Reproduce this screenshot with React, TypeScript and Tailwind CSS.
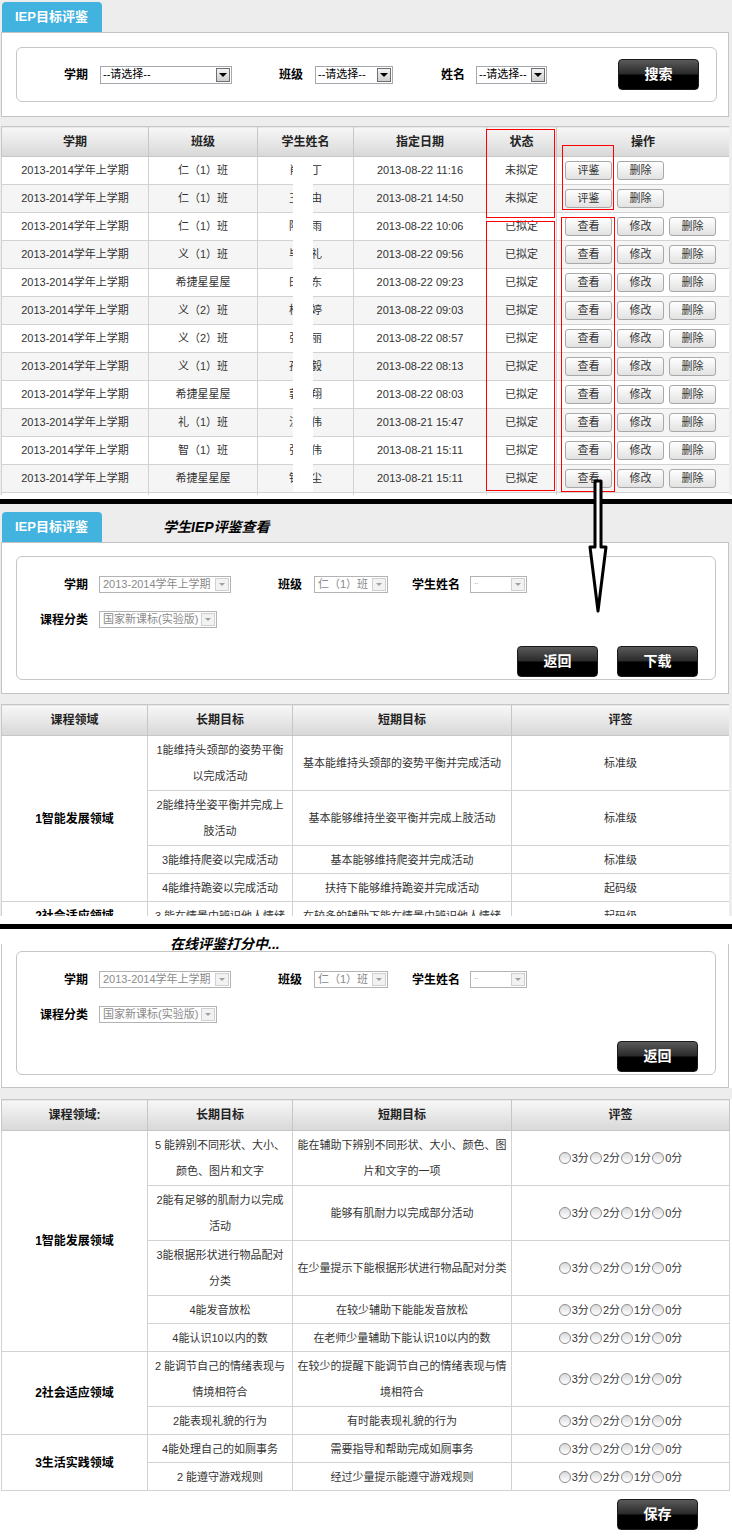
import React from "react";

const FONT = "font-['Liberation_Sans','Noto_Sans_CJK_SC',sans-serif]";

const th =
  "h-[30px] border border-[#c6c6c6] bg-gradient-to-b from-[#f7f7f7] to-[#d8d8d8] text-[12px] font-bold text-[#222] text-center";
const td = "h-[28px] border border-[#d2d2d2] text-center text-[11px] text-[#333] whitespace-nowrap px-0";

function Tab() {
  return (
    <div className="flex h-[30px] w-[100px] items-center rounded-t-[4px] bg-[#42b2df] pl-[13px] text-[13px] font-bold text-white">
      IEP目标评鉴
    </div>
  );
}

function Select({ className, text }: { className: string; text: React.ReactNode }) {
  return (
    <div className={`flex h-[18px] items-stretch border border-[#a3a9ae] bg-white p-[1px] ${className}`}>
      <span className="flex flex-1 items-center overflow-hidden whitespace-nowrap pl-[1px] text-[11px] text-black">{text}</span>
      <span className="flex w-[14px] items-center justify-center border border-[#6f6f6f] bg-gradient-to-b from-[#f2f2f2] to-[#cfcfcf]">
        <span className="h-0 w-0 border-x-[4px] border-t-[4px] border-x-transparent border-t-black" />
      </span>
    </div>
  );
}

function DSelect({ className, text }: { className: string; text: React.ReactNode }) {
  return (
    <div className={`flex h-[17px] items-stretch border border-[#b3b3b3] bg-white p-[1px] ${className}`}>
      <span className="flex flex-1 items-center overflow-hidden whitespace-nowrap pl-[2px] text-[11px] text-[#8a8a8a]">{text}</span>
      <span className="flex w-[14px] items-center justify-center border border-[#d0d0d0] bg-[#f2f2f2]">
        <span className="h-0 w-0 border-x-[3px] border-t-[3px] border-x-transparent border-t-[#a0a0a0]" />
      </span>
    </div>
  );
}

function Label({ className, children }: { className: string; children: React.ReactNode }) {
  return <span className={`text-right text-[12px] font-bold text-black ${className}`}>{children}</span>;
}

function BlackBtn({ children, className = "" }: { children: React.ReactNode; className?: string }) {
  return (
    <div
      className={`flex h-[31px] w-[81px] items-center justify-center rounded-[4px] border border-[#1a1a1a] bg-[linear-gradient(#5a5a5a_0%,#2a2a2a_48%,#000_52%,#000_100%)] text-[14px] font-bold text-white ${className}`}
    >
      {children}
    </div>
  );
}

function GrayBtn({ children }: { children: React.ReactNode }) {
  return (
    <div className="flex h-[19px] w-[47px] items-center justify-center rounded-[3px] border border-[#a8a8a8] bg-gradient-to-b from-white to-[#e2e2e2] text-[11px] text-[#333]">
      {children}
    </div>
  );
}

function Radios() {
  return (
    <div className="flex justify-center gap-[1px]">
      {["3分", "2分", "1分", "0分"].map((s) => (
        <span key={s} className="flex items-center">
          <span className="mr-[1px] h-[12px] w-[12px] rounded-full border border-[#8d8d8d] bg-gradient-to-b from-[#d9d9d9] to-white" />
          <span className="text-[11px] text-[#333]">{s}</span>
        </span>
      ))}
    </div>
  );
}

const list = [
  { cls: "仁（1）班", name: "肖丁丁", date: "2013-08-22 11:16", done: false },
  { cls: "仁（1）班", name: "王子由", date: "2013-08-21 14:50", done: false },
  { cls: "仁（1）班", name: "陈思雨", date: "2013-08-22 10:06", done: true },
  { cls: "义（1）班", name: "毕文礼", date: "2013-08-22 09:56", done: true },
  { cls: "希捷星星屋", name: "田晓东", date: "2013-08-22 09:23", done: true },
  { cls: "义（2）班", name: "杨晓婷", date: "2013-08-22 09:03", done: true },
  { cls: "义（2）班", name: "张丽丽", date: "2013-08-22 08:57", done: true },
  { cls: "义（1）班", name: "孙弘毅", date: "2013-08-22 08:13", done: true },
  { cls: "希捷星星屋", name: "郭鹏翔", date: "2013-08-22 08:03", done: true },
  { cls: "礼（1）班", name: "汪小伟", date: "2013-08-21 15:47", done: true },
  { cls: "智（1）班", name: "张小伟", date: "2013-08-21 15:11", done: true },
  { cls: "希捷星星屋", name: "钱晓尘", date: "2013-08-21 15:11", done: true },
];

type Goal = { domain?: string; span?: number; long: React.ReactNode; short: React.ReactNode; h: string };

const viewGoals: (Goal & { level: string })[] = [
  { domain: "1智能发展领域", span: 4, long: <>1能维持头颈部的姿势平衡<br />以完成活动</>, short: "基本能维持头颈部的姿势平衡并完成活动", level: "标准级", h: "h-[55px]" },
  { long: <>2能维持坐姿平衡并完成上<br />肢活动</>, short: "基本能够维持坐姿平衡并完成上肢活动", level: "标准级", h: "h-[55px]" },
  { long: "3能维持爬姿以完成活动", short: "基本能够维持爬姿并完成活动", level: "标准级", h: "h-[28px]" },
  { long: "4能维持跪姿以完成活动", short: "扶持下能够维持跪姿并完成活动", level: "起码级", h: "h-[28px]" },
  { domain: "2社会适应领域", span: 1, long: "3 能在情景中辨识他人情绪", short: "在较多的辅助下能在情景中辨识他人情绪", level: "起码级", h: "h-[28px]" },
];

const scoreGoals: Goal[] = [
  { domain: "1智能发展领域", span: 5, long: <>5 能辨别不同形状、大小、<br />颜色、图片和文字</>, short: <>能在辅助下辨别不同形状、大小、颜色、图<br />片和文字的一项</>, h: "h-[55px]" },
  { long: <>2能有足够的肌耐力以完成<br />活动</>, short: "能够有肌耐力以完成部分活动", h: "h-[55px]" },
  { long: <>3能根据形状进行物品配对<br />分类</>, short: "在少量提示下能根据形状进行物品配对分类", h: "h-[55px]" },
  { long: "4能发音放松", short: "在较少辅助下能能发音放松", h: "h-[28px]" },
  { long: "4能认识10以内的数", short: "在老师少量辅助下能认识10以内的数", h: "h-[28px]" },
  { domain: "2社会适应领域", span: 2, long: <>2 能调节自己的情绪表现与<br />情境相符合</>, short: <>在较少的提醒下能调节自己的情绪表现与情<br />境相符合</>, h: "h-[55px]" },
  { long: "2能表现礼貌的行为", short: "有时能表现礼貌的行为", h: "h-[28px]" },
  { domain: "3生活实践领域", span: 2, long: "4能处理自己的如厕事务", short: "需要指导和帮助完成如厕事务", h: "h-[28px]" },
  { long: "2 能遵守游戏规则", short: "经过少量提示能遵守游戏规则", h: "h-[28px]" },
];

const gcell = "border border-[#d2d2d2] text-center text-[11px] leading-[26px] text-[#333] whitespace-nowrap p-0";

function GoalCols() {
  return (
    <colgroup>
      <col className="w-[146px]" />
      <col className="w-[145px]" />
      <col className="w-[219px]" />
      <col className="w-[218px]" />
    </colgroup>
  );
}

function Filters() {
  return (
    <>
      <div className="flex h-[17px] items-center">
        <Label className="w-[71px]">学期</Label>
        <DSelect className="ml-[11px] w-[132px]" text="2013-2014学年上学期" />
        <Label className="w-[71px]">班级</Label>
        <DSelect className="ml-[12px] w-[74px]" text="仁（1）班" />
        <Label className="w-[72px]">学生姓名</Label>
        <DSelect className="ml-[10px] w-[57px]" text={<span className="text-[7px] tracking-[-1px] text-[#777]">· ·</span>} />
      </div>
      <div className="mt-[18px] flex h-[17px] items-center">
        <Label className="w-[71px]">课程分类</Label>
        <DSelect className="ml-[11px] w-[118px]" text="国家新课标(实验版)" />
      </div>
    </>
  );
}

export default function App() {
  return (
    <div className={`relative w-[732px] overflow-hidden bg-[#ededed] ${FONT}`}>
      {/* list */}
      <div className="relative">
        <div className="pl-[2px] pt-[2px]">
          <Tab />
        </div>
        <div className="ml-[1px] h-[85px] w-[728px] border border-[#c4c4c4] bg-white">
          <div className="ml-[14px] mt-[14px] flex h-[55px] w-[701px] items-center rounded-[6px] border border-[#c6c6c6]">
            <Label className="w-[71px]">学期</Label>
            <Select className="ml-[12px] w-[132px]" text="--请选择--" />
            <Label className="w-[71px]">班级</Label>
            <Select className="ml-[12px] w-[78px]" text="--请选择--" />
            <Label className="w-[72px]">姓名</Label>
            <Select className="ml-[11px] w-[71px]" text="--请选择--" />
            <div className="flex-1" />
            <BlackBtn className="mr-[17px]">搜索</BlackBtn>
          </div>
        </div>
        <div className="ml-[1px] mt-[9px] h-[369px] w-[728px] overflow-hidden bg-white">
          <table className="w-[728px] table-fixed border-collapse">
            <colgroup>
              <col className="w-[147px]" />
              <col className="w-[109px]" />
              <col className="w-[96px]" />
              <col className="w-[133px]" />
              <col className="w-[70px]" />
              <col className="w-[173px]" />
            </colgroup>
            <thead>
              <tr>
                <th className={th}>学期</th>
                <th className={th}>班级</th>
                <th className={th}>学生姓名</th>
                <th className={th}>指定日期</th>
                <th className={th}>状态</th>
                <th className={th}>操作</th>
              </tr>
            </thead>
            <tbody>
              {list.map((r, i) => (
                <tr key={i} className={i % 2 === 1 ? "bg-[#f5f5f5]" : "bg-white"}>
                  <td className={td}>2013-2014学年上学期</td>
                  <td className={td}>{r.cls}</td>
                  <td className={td}>{r.name}</td>
                  <td className={td}>{r.date}</td>
                  <td className={td}>{r.done ? "已拟定" : "未拟定"}</td>
                  <td className="h-[28px] border border-[#d2d2d2] p-0">
                    <div className="flex gap-[5px] pl-[8px]">
                      {r.done ? (
                        <>
                          <GrayBtn>查看</GrayBtn>
                          <GrayBtn>修改</GrayBtn>
                          <GrayBtn>删除</GrayBtn>
                        </>
                      ) : (
                        <>
                          <GrayBtn>评鉴</GrayBtn>
                          <GrayBtn>删除</GrayBtn>
                        </>
                      )}
                    </div>
                  </td>
                </tr>
              ))}
              <tr className="bg-white">
                <td className={td} />
                <td className={td} />
                <td className={td} />
                <td className={td} />
                <td className={td} />
                <td className={td} />
              </tr>
            </tbody>
          </table>
        </div>
        <div className="h-[4px] bg-white" />
        <div className="h-[5px] bg-black" />

        {/* privacy mask over names */}
        <div className="absolute left-[293px] top-[164px] h-[328px] w-[20px] bg-white" />
        {/* red highlight boxes */}
        <div className="absolute left-[486px] top-[129px] h-[89px] w-[69px] border border-[#ff0000]" />
        <div className="absolute left-[486px] top-[221px] h-[270px] w-[69px] border border-[#ff0000]" />
        <div className="absolute left-[562px] top-[145px] h-[65px] w-[52px] border border-[#ff0000]" />
        <div className="absolute left-[561px] top-[217px] h-[275px] w-[54px] border border-[#ff0000]" />
      </div>

      {/* view */}
      <div className="pt-[8px]">
        <div className="flex items-center pl-[2px]">
          <Tab />
          <span className="ml-[61px] text-[14px] font-bold italic text-black">学生IEP评鉴查看</span>
        </div>
        <div className="ml-[1px] h-[152px] w-[728px] border border-[#c4c4c4] bg-white">
          <div className="ml-[14px] mt-[13px] h-[124px] w-[700px] rounded-[6px] border border-[#c6c6c6] pt-[19px]">
            <Filters />
            <div className="mt-[18px] flex h-[31px] justify-end gap-[19px] pr-[17px]">
              <BlackBtn>返回</BlackBtn>
              <BlackBtn>下载</BlackBtn>
            </div>
          </div>
        </div>
        <div className="ml-[1px] mt-[10px] h-[212px] w-[728px] overflow-hidden bg-white">
          <table className="w-[728px] table-fixed border-collapse">
            <GoalCols />
            <thead>
              <tr>
                <th className={`${th} h-[31px]`}>课程领域</th>
                <th className={`${th} h-[31px]`}>长期目标</th>
                <th className={`${th} h-[31px]`}>短期目标</th>
                <th className={`${th} h-[31px]`}>评签</th>
              </tr>
            </thead>
            <tbody>
              {viewGoals.map((g, i) => (
                <tr key={i}>
                  {g.domain && (
                    <td rowSpan={g.span} className="border border-[#d2d2d2] text-center text-[12px] font-bold text-black">
                      {g.domain}
                    </td>
                  )}
                  <td className={`${gcell} ${g.h}`}>{g.long}</td>
                  <td className={`${gcell} ${g.h}`}>{g.short}</td>
                  <td className={`${gcell} ${g.h}`}>{g.level}</td>
                </tr>
              ))}
            </tbody>
          </table>
        </div>
        <div className="h-[8px] bg-white" />
        <div className="h-[5px] bg-black" />
      </div>

      {/* scoring */}
      <div className="bg-white">
        <div className="h-[15px]">
          <div className="relative z-10 pl-[170px] pt-[6px] text-[14px] font-bold italic leading-[18px] text-black">
            在线评鉴打分中...
          </div>
        </div>
        <div className="ml-[1px] h-[144px] w-[728px] border-x border-b border-[#c4c4c4] bg-white pt-[7px]">
          <div className="ml-[14px] h-[124px] w-[700px] rounded-[6px] border border-[#c6c6c6] pt-[19px]">
            <Filters />
            <div className="mt-[18px] flex h-[31px] justify-end pr-[17px]">
              <BlackBtn>返回</BlackBtn>
            </div>
          </div>
        </div>
        <div className="h-[11px] bg-[#ededed]" />
        <div className="ml-[1px] w-[728px]">
          <table className="w-[728px] table-fixed border-collapse">
            <GoalCols />
            <thead>
              <tr>
                <th className={`${th} h-[31px]`}>课程领域:</th>
                <th className={`${th} h-[31px]`}>长期目标</th>
                <th className={`${th} h-[31px]`}>短期目标</th>
                <th className={`${th} h-[31px]`}>评签</th>
              </tr>
            </thead>
            <tbody>
              {scoreGoals.map((g, i) => (
                <tr key={i}>
                  {g.domain && (
                    <td rowSpan={g.span} className="border border-[#d2d2d2] text-center text-[12px] font-bold text-black">
                      {g.domain}
                    </td>
                  )}
                  <td className={`${gcell} ${g.h}`}>{g.long}</td>
                  <td className={`${gcell} ${g.h}`}>{g.short}</td>
                  <td className={`${gcell} ${g.h}`}>
                    <Radios />
                  </td>
                </tr>
              ))}
            </tbody>
          </table>
        </div>
        <div className="flex h-[45px] justify-end pr-[34px] pt-[8px]">
          <BlackBtn>保存</BlackBtn>
        </div>
      </div>

      {/* hollow arrow from the list to the view page */}
      <svg className="pointer-events-none absolute left-0 top-0" width="732" height="620" viewBox="0 0 732 620">
        <polygon
          points="595,481 601,481 601,547 606,547 598,611 590,547 595,547"
          fill="white"
          stroke="black"
          strokeWidth="3"
          strokeLinejoin="round"
        />
      </svg>
    </div>
  );
}
